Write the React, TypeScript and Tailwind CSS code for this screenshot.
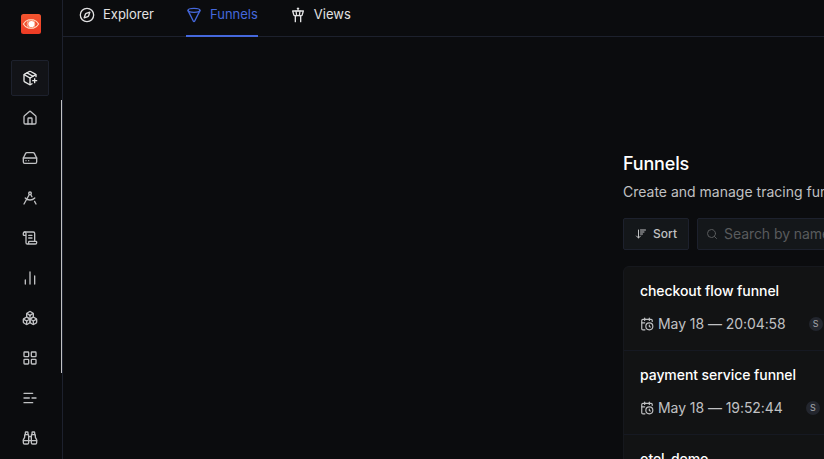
import React from 'react';
import {
  ArrowDownWideNarrow, Binoculars, Boxes, CalendarClock, ChartNoAxesColumn, Compass, Cone,
  DraftingCompass, HardDrive, House, LayoutGrid, ListMinus, PackagePlus, ScrollText, Search, TowerControl,
} from 'lucide-react';

const navItems = [House, HardDrive, DraftingCompass, ScrollText, ChartNoAxesColumn, Boxes, LayoutGrid, ListMinus, Binoculars];

const funnels = [
  { name: 'checkout flow funnel', date: 'May 18 — 20:04:58' },
  { name: 'payment service funnel', date: 'May 18 — 19:52:44' },
  { name: 'otel-demo', date: 'May 18 — 19:40:12' },
];

function Logo() {
  return (
    <svg width="20" height="20" viewBox="0 0 20 20" className="ml-px">
      <defs>
        <linearGradient id="brand" x1="0" y1="0" x2="0" y2="1">
          <stop offset="0" stopColor="#f2552f" />
          <stop offset="1" stopColor="#ee3b24" />
        </linearGradient>
      </defs>
      <rect width="20" height="20" rx="2.5" fill="url(#brand)" />
      <path d="M7.6 5.7C5.3 6.4 3.5 8 2.4 10c1.1 2 2.9 3.6 5.2 4.3M12.4 5.7c2.3.7 4.1 2.3 5.2 4.3-1.1 2-2.9 3.6-5.2 4.3M7.6 5.7h4.8M7.6 14.3h4.8" fill="none" stroke="#ffdcc2" strokeWidth="1.1" />
      <circle cx="10" cy="10" r="4" fill="#f4633f" stroke="#ffd0b4" strokeWidth="0.7" />
      <circle cx="10.4" cy="10" r="3.1" fill="#fff" />
    </svg>
  );
}

function Sidebar() {
  return (
    <aside className="relative flex w-[63px] shrink-0 flex-col items-center border-r border-[#1d212d] pr-[2px] pt-[14px] text-[#c0c1c3]">
      <Logo />
      <button className="mt-[26px] flex h-9 w-[38px] shrink-0 items-center justify-center rounded-[2px] border border-[#1d212d] bg-[#121317] text-[#e8e8e8]">
        <PackagePlus size={16} />
      </button>
      <nav className="mt-[2px] flex flex-col">
        {navItems.map((Icon, i) => (
          <span key={i} className="flex h-10 w-9 items-center justify-center">
            <Icon size={16} />
          </span>
        ))}
      </nav>
      <div className="absolute right-0 top-[100px] h-[273px] w-px bg-[#c0c1c3]" />
    </aside>
  );
}

function Tabs() {
  return (
    <div className="flex h-[37px] shrink-0 gap-8 border-b border-[#1d212d] pl-4 text-[13px] leading-[28px] text-[#e2e2e3]">
      <div className="flex h-[30px] gap-2"><Compass size={16} className="mt-[7px]" />Explorer</div>
      <div className="flex h-[37px] gap-2 border-b-2 border-[#4568dc] text-[#4568dc]">
        <Cone size={16} className="mt-[7px] rotate-180" />Funnels
      </div>
      <div className="flex h-[30px] gap-2"><TowerControl size={16} className="mt-[7px]" />Views</div>
    </div>
  );
}

export default function App() {
  return (
    <div className="flex h-[459px] w-[824px] overflow-hidden bg-[#0b0c0e] font-['Inter',sans-serif]">
      <Sidebar />
      <main className="flex min-w-0 flex-1 flex-col">
        <Tabs />
        <section className="ml-[560px] mt-[113px] w-[640px] shrink-0">
          <h1 className="text-lg font-medium leading-7 tracking-[-0.18px] text-white">Funnels</h1>
          <p className="mt-1 whitespace-nowrap text-sm leading-5 text-[#c0c1c3]">Create and manage tracing funnels.</p>
          <div className="mt-4 flex gap-2">
            <button className="flex h-8 w-[66px] items-center justify-center gap-[6px] rounded-[2px] border border-[#1d212d] bg-[#14171a] text-xs font-medium text-[#c0c1c3]">
              <ArrowDownWideNarrow size={12} />Sort
            </button>
            <div className="flex h-8 flex-1 items-center gap-[6px] rounded-[2px] border border-[#1d212d] bg-[#14171a] px-2 text-sm tracking-[-0.07px] text-[#595b5d]">
              <Search size={12} />Search by name
            </div>
          </div>
          <ul className="mt-4 rounded-md border border-[#16181d] bg-[#121314]">
            {funnels.map((f) => (
              <li key={f.name} className="h-[84px] border-b border-[#161922] px-4 pt-[14px] text-sm tracking-[-0.07px]">
                <div className="font-medium leading-5 text-white">{f.name}</div>
                <div className="mt-[13px] flex h-5 items-center text-[#c0c1c3]">
                  <CalendarClock size={14} className="mr-1" />
                  <span>{f.date}</span>
                  <span className="ml-[23px] flex size-[14px] items-center justify-center rounded-full bg-[#23262e] text-[9px] text-[#a5a7ac]">S</span>
                </div>
              </li>
            ))}
          </ul>
        </section>
      </main>
    </div>
  );
}
